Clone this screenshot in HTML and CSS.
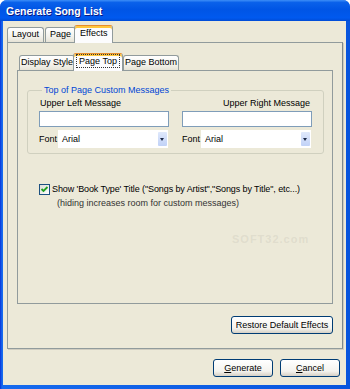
FILE: index.html
```html
<!DOCTYPE html>
<html lang="en">
<head>
    <meta charset="UTF-8">
    <meta name="viewport" content="width=device-width, initial-scale=1.0">
    <title>Generate Song List</title>
    <link rel="stylesheet" href="styles.css">
</head>
<body>

    <div class="window">
        <div class="titlebar"><span class="title">Generate Song List</span></div>

        <div class="client">
            <!-- outer tabs -->
            <div class="tabs">
                <div class="tab">Layout</div>
                <div class="tab">Page</div>
                <div class="tab active">Effects</div>
            </div>

            <div class="panel outer-panel">
                <!-- inner tabs -->
                <div class="tabs inner-tabs">
                    <div class="tab">Display Style</div>
                    <div class="tab active"><span class="focus">Page Top</span></div>
                    <div class="tab">Page Bottom</div>
                </div>

                <div class="panel inner-panel">
                    <fieldset class="group">
                        <legend>Top of Page Custom Messages</legend>
                        <div class="msg-cols">
                            <div class="msg-col">
                                <div class="msg-label">Upper Left Message</div>
                                <div class="textbox"></div>
                                <div class="font-row">
                                    <span class="font-label">Font</span>
                                    <div class="combo"><span>Arial</span><span class="drop"></span></div>
                                </div>
                            </div>
                            <div class="msg-col">
                                <div class="msg-label right">Upper Right Message</div>
                                <div class="textbox"></div>
                                <div class="font-row">
                                    <span class="font-label">Font</span>
                                    <div class="combo"><span>Arial</span><span class="drop"></span></div>
                                </div>
                            </div>
                        </div>
                    </fieldset>

                    <div class="check-row">
                        <span class="checkbox">
                            <svg width="9" height="9" viewBox="0 0 9 9"><path d="M1.5 4 L3.5 6 L7.5 2" fill="none" stroke="#21a121" stroke-width="1.8"/></svg>
                        </span>
                        <span class="check-text">Show 'Book Type' Title ("Songs by Artist","Songs by Title", etc...)</span>
                    </div>
                    <div class="check-note">(hiding increases room for custom messages)</div>

                    <div class="watermark">SOFT32.com</div>
                </div>

                <div class="restore-row">
                    <button class="xp-btn restore">Restore Default Effects</button>
                </div>
            </div>

            <div class="dialog-buttons">
                <button class="xp-btn"><u>G</u>enerate</button>
                <button class="xp-btn"><u>C</u>ancel</button>
            </div>
        </div>
    </div>

</body>
</html>
```

FILE: styles.css
```css
body {
    margin: 0;
    background-color: #ffffff;
    font-family: 'Liberation Sans', Arial, sans-serif;
    font-size: 9px;
    color: #000;
}

/* window frame */
.window {
    width: 350px;
    height: 389px;
    box-sizing: border-box;
    display: flex;
    flex-direction: column;
    background: linear-gradient(to right, #0831d9, #166aee 2px, #0855dd);
    padding: 0 4px 4px 3px;
    border-radius: 7px 7px 0 0;
    overflow: hidden;
}
.titlebar {
    height: 21px;
    margin: 0 -4px 0 -3px;
    padding-left: 6px;
    display: flex;
    align-items: center;
    background: linear-gradient(to bottom, #3d8ef7 0%, #0a61ea 12%, #0055e5 45%, #0059ef 85%, #004cd6 100%);
}
.title {
    color: #fff;
    font-weight: bold;
    font-size: 10.5px;
    text-shadow: 1px 1px 0 #0a1883;
}
.client {
    flex: 1;
    display: flex;
    flex-direction: column;
    background-color: #ece9d8;
    padding: 4px 3px 8px 4px;
}

/* tabs */
.tabs {
    display: flex;
    align-items: flex-end;
    height: 18px;
    margin-bottom: -1px;
    position: relative;
    z-index: 2;
}
.tab {
    height: 15px;
    box-sizing: border-box;
    margin-bottom: 1px;
    padding: 0 4px;
    line-height: 13px;
    border: 1px solid #919b9c;
    border-bottom: none;
    border-radius: 3px 3px 0 0;
    background: linear-gradient(to bottom, #ffffff, #f3f2ec 60%, #e6e3d6);
    white-space: nowrap;
}
.tab + .tab {
    margin-left: 1px;
}
.tab.active {
    height: 18px;
    margin: 0 -2px;
    padding: 0 5px;
    line-height: 14px;
    position: relative;
    z-index: 1;
    background: #fcfcfe;
    border-top: 1px solid #e68b2c;
    box-shadow: inset 0 2px 0 #ffc73c;
}
.tab.active + .tab {
    margin-left: 2px;
}
.focus {
    outline: 1px dotted #333;
    padding: 1px 2px;
}
.inner-tabs {
    padding-left: 2px;
}
.inner-tabs .tab {
    padding: 0 1px;
}
.inner-tabs .tab.active {
    padding: 0 3px;
}

.panel {
    border: 1px solid #919b9c;
    background-color: #ece9d8;
    display: flex;
    flex-direction: column;
}
.outer-panel {
    flex: 1;
    padding: 10px 9px 14px 9px;
    border-right-color: #7f8a8b;
    box-shadow: 1px 1px 0 #d0cdc0;
}
.inner-panel {
    flex: 1;
    padding: 13px 8px 0 9px;
    position: relative;
}

/* group box */
.group {
    margin: 0;
    padding: 1px 11px 5px 11px;
    border: 1px solid #d0d0bf;
    border-radius: 3px;
}
.group legend {
    color: #0046d5;
    line-height: 12px;
    padding: 0 2px;
    margin-left: 3px;
}
.msg-cols {
    display: flex;
    gap: 13px;
}
.msg-col {
    width: 130px;
}
.msg-label {
    line-height: 12px;
    padding-left: 1px;
}
.msg-label.right {
    text-align: right;
    padding: 0 2px 0 0;
}
.textbox {
    height: 16px;
    box-sizing: border-box;
    margin-top: 2px;
    border: 1px solid #7f9db9;
    background: #fff;
}
.font-row {
    display: flex;
    align-items: center;
    margin-top: 3px;
}
.font-label {
    width: 19px;
}
.combo {
    flex: 1;
    height: 18px;
    margin-right: 1px;
    background: #fff;
    display: flex;
    align-items: center;
    justify-content: space-between;
    padding: 0 1px 0 4px;
}
.drop {
    width: 9px;
    height: 14px;
    border-radius: 1px;
    background: linear-gradient(to bottom, #dfe8fb, #c1d2f7);
    position: relative;
}
.drop::after {
    content: "";
    position: absolute;
    left: 2px;
    top: 6px;
    border-left: 2.5px solid transparent;
    border-right: 2.5px solid transparent;
    border-top: 3px solid #1d2a49;
}

/* checkbox */
.check-row {
    display: flex;
    align-items: center;
    margin: 29px 0 0 12px;
    line-height: 12px;
}
.check-text {
    letter-spacing: -0.1px;
}
.checkbox {
    width: 11px;
    height: 11px;
    box-sizing: border-box;
    border: 1px solid #1c5180;
    background: linear-gradient(135deg, #dcdcd7, #ffffff);
    display: flex;
    align-items: center;
    justify-content: center;
    margin-right: 2px;
}
.check-note {
    margin: 2px 0 0 30px;
    line-height: 12px;
    color: #333;
}
.watermark {
    position: absolute;
    left: 214px;
    top: 162px;
    font-size: 11px;
    font-weight: bold;
    color: rgba(160, 160, 150, 0.18);
    letter-spacing: 1px;
}

/* buttons */
.xp-btn {
    height: 18px;
    box-sizing: border-box;
    font-family: 'Liberation Sans', Arial, sans-serif;
    font-size: 9px;
    color: #000;
    border: 1px solid #003c74;
    border-radius: 3px;
    background: linear-gradient(to bottom, #ffffff, #f4f3ee 70%, #d6d0c5);
    padding: 0;
}
.restore-row {
    display: flex;
    justify-content: flex-end;
    margin-top: 12px;
}
.restore {
    width: 102px;
}
.dialog-buttons {
    display: flex;
    justify-content: flex-end;
    gap: 7px;
    margin-top: 10px;
    padding-right: 3px;
}
.dialog-buttons .xp-btn {
    width: 60px;
}
```
